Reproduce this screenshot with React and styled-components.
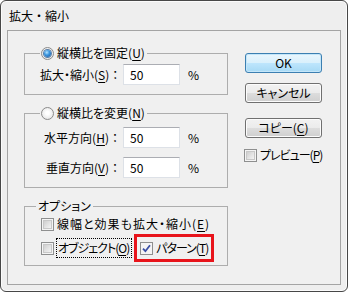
import React from 'react';
import styled, { createGlobalStyle } from 'styled-components';

const GlobalStyle = createGlobalStyle`
  html, body {
    margin: 0;
    padding: 0;
    background: #ffffff;
  }
  body {
    font-family: "Noto Sans CJK JP", "Noto Sans", sans-serif;
    color: #000000;
  }
`;

const Window = styled.div`
  box-sizing: border-box;
  width: 348px;
  height: 292px;
  border: 1px solid #474747;
  border-radius: 6px;
  box-shadow: inset 0 0 0 1px #fbfbfb;
  background: #eeeeee;
  padding: 0 6px 6px 6px;
  display: flex;
  flex-direction: column;
`;

const TitleBar = styled.div`
  height: 29px;
  display: flex;
  align-items: center;
  padding-left: 2px;
  font-size: 12px;
  line-height: 1;
`;

const Client = styled.div`
  flex: 1;
  display: flex;
  border: 1px solid #a4a4a4;
  background: #f0f0f0;
  padding: 14px 0 0 16px;
  font-size: 12px;
  font-feature-settings: "palt";
  line-height: 16px;
  white-space: nowrap;
`;

const LeftCol = styled.div`
  width: 204px;
  display: flex;
  flex-direction: column;
  gap: 10px;
`;

const RightCol = styled.div`
  width: 77px;
  margin-left: 17px;
  padding-top: 8px;
  display: flex;
  flex-direction: column;
`;

const Group = styled.fieldset`
  margin: 0;
  min-width: 0;
  border: 1px solid #adadad;
  padding: ${p => p.$pad};
  display: flex;
  flex-direction: column;
  gap: ${p => p.$gap || 0}px;
`;

const Legend = styled.legend`
  display: flex;
  align-items: center;
  height: 16px;
  padding: ${p => (p.$plain ? '0 2px' : '0 2px 0 0')};
  margin-left: ${p => (p.$plain ? '-4px' : '0')};
`;

const Radio = styled.span`
  box-sizing: border-box;
  width: 13px;
  height: 13px;
  margin-left: 1px;
  margin-right: 3px;
  border: 1px solid #8b8b8b;
  border-radius: 50%;
  background: radial-gradient(circle at 50% 45%, #ffffff 20%, #dcdcdc 100%);
  display: inline-flex;
  align-items: center;
  justify-content: center;
`;

const RadioDot = styled.span`
  width: 7px;
  height: 7px;
  border-radius: 50%;
  background: radial-gradient(circle at 40% 35%, #b6e4ff 0%, #3e98e0 40%, #0f4f9a 100%);
  box-shadow: 0 0 0 1px #5a7fa8;
`;

const U = styled.span`
  text-decoration: underline;
  text-underline-offset: 2px;
`;

const Text = styled.span`
  letter-spacing: ${p => p.$track || 0}px;
`;

const FieldRow = styled.div`
  display: flex;
  align-items: center;
  height: 21px;
`;

const FieldLabel = styled.span`
  width: 81px;
  text-align: right;
  margin-right: 2px;
`;

const Colon = styled.span`
  font-feature-settings: normal;
`;

const NumInput = styled.input`
  box-sizing: border-box;
  width: 57px;
  height: 21px;
  margin: 0;
  border: 1px solid #dde1e7;
  border-top-color: #abadb3;
  background: #ffffff;
  padding: 0 0 0 6px;
  font: inherit;
  color: #000000;
  outline: none;
`;

const Unit = styled.span`
  margin-left: 8px;
`;

const CheckRow = styled.div`
  display: flex;
  align-items: center;
  height: ${p => p.$h || 18}px;
`;

const Box = styled.span`
  box-sizing: border-box;
  flex: none;
  width: 13px;
  height: 13px;
  margin-left: ${p => p.$ml || 0}px;
  margin-right: 3px;
  border: 1px solid #8e8f8f;
  background: #f4f4f4;
  display: inline-flex;
  align-items: center;
  justify-content: center;
`;

const BoxInner = styled.span`
  box-sizing: border-box;
  width: 9px;
  height: 9px;
  border: 1px solid #c8c8c8;
  background: linear-gradient(135deg, #cfcfcf 0%, #f4f4f4 100%);
`;

const Focus = styled.span`
  padding: 0 2px 0 1px;
  line-height: 18px;
  outline: 1px dotted #000000;
`;

const Highlight = styled.div`
  display: flex;
  align-items: center;
  height: 28px;
  box-sizing: border-box;
  margin-left: 3px;
  padding: 0 3px 0 3px;
  border: 3px solid #e8141b;
`;

const Button = styled.button`
  box-sizing: border-box;
  width: 77px;
  height: 20px;
  margin: 0 0 ${p => p.$mb || 0}px 0;
  padding: 0;
  border: 1px solid ${p => (p.$primary ? '#3c7fb1' : '#707070')};
  border-radius: 3px;
  background: ${p =>
    p.$primary
      ? 'linear-gradient(#eaf6fd 0%, #d9f0fc 50%, #bee6fd 50%, #a7d9f5 100%)'
      : 'linear-gradient(#f2f2f2 0%, #ebebeb 50%, #dddddd 50%, #cfcfcf 100%)'};
  box-shadow: inset 0 0 0 1px ${p => (p.$primary ? '#c4e6f9' : '#fcfcfc')};
  font-family: inherit;
  font-size: 12px;
  font-feature-settings: "palt";
  color: #000000;
  line-height: 1;
`;

const CheckBox = ({ checked, ml }) => (
  <Box $ml={ml}>
    {checked ? (
      <svg width="11" height="11" viewBox="0 0 11 11">
        <path d="M2 5.6 L4.4 8.2 L9 2.2" fill="none" stroke="#3a4fa6" strokeWidth="1.8" />
      </svg>
    ) : (
      <BoxInner />
    )}
  </Box>
);

const App = () => (
  <>
    <GlobalStyle />
    <Window>
      <TitleBar>拡大・縮小</TitleBar>
      <Client>
        <LeftCol>
          <Group $pad="3px 0 9px 15px">
            <Legend>
              <Radio><RadioDot /></Radio>
              縦横比を固定(<U>U</U>)
            </Legend>
            <FieldRow>
              <FieldLabel>拡大・縮小(<U>S</U>)<Colon>：</Colon></FieldLabel>
              <NumInput readOnly value="50" />
              <Unit>%</Unit>
            </FieldRow>
          </Group>

          <Group $pad="6px 0 9px 15px" $gap={9}>
            <Legend>
              <Radio />
              縦横比を変更(<U>N</U>)
            </Legend>
            <FieldRow>
              <FieldLabel>水平方向(<U>H</U>)<Colon>：</Colon></FieldLabel>
              <NumInput readOnly value="50" />
              <Unit>%</Unit>
            </FieldRow>
            <FieldRow>
              <FieldLabel>垂直方向(<U>V</U>)<Colon>：</Colon></FieldLabel>
              <NumInput readOnly value="50" />
              <Unit>%</Unit>
            </FieldRow>
          </Group>

          <Group $pad="1px 0 3px 15px" $gap={1}>
            <Legend $plain>オプション</Legend>
            <CheckRow>
              <CheckBox ml={1} />
              <Text $track={1}>線幅と効果も拡大・縮小(<U>E</U>)</Text>
            </CheckRow>
            <CheckRow $h={28}>
              <CheckBox ml={1} />
              <Focus>
                <Text $track={-1}>オブジェクト(<U>O</U>)</Text>
              </Focus>
              <Highlight>
                <CheckBox checked />
                <Text $track={-1}>パターン(<U>T</U>)</Text>
              </Highlight>
            </CheckRow>
          </Group>
        </LeftCol>

        <RightCol>
          <Button $primary $mb={10}>OK</Button>
          <Button $mb={15}>キャンセル</Button>
          <Button $mb={10}>コピー(<U>C</U>)</Button>
          <CheckRow $h={14}>
            <CheckBox ml={-1} />
            <Text $track={-1}>プレビュー(<U>P</U>)</Text>
          </CheckRow>
        </RightCol>
      </Client>
    </Window>
  </>
);

export default App;
